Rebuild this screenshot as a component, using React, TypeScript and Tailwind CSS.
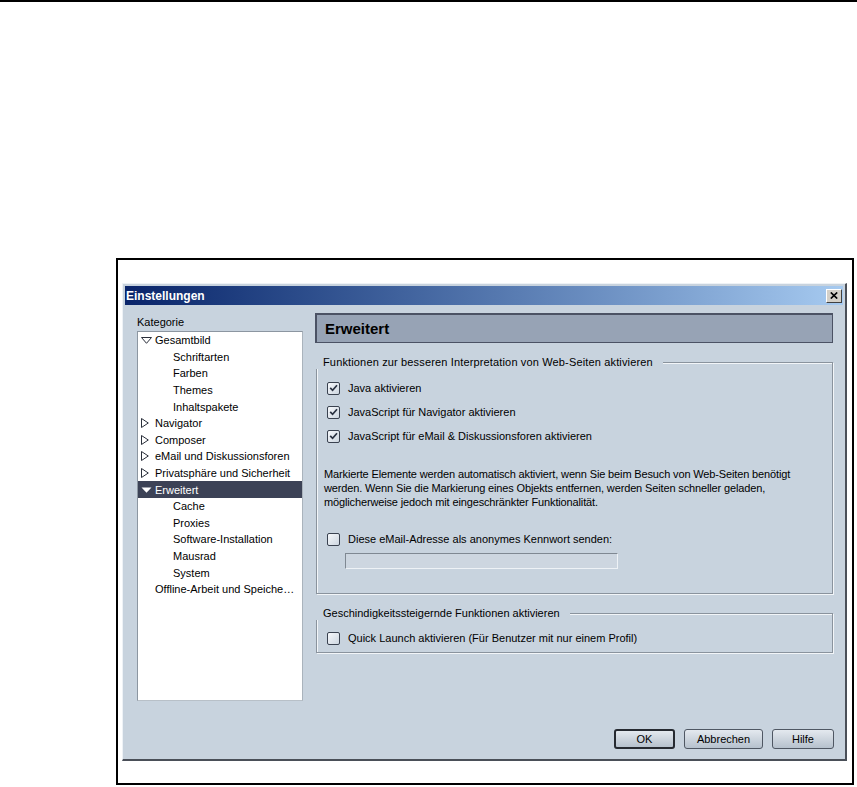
import React from "react";

type Item = { label: string; level: 0 | 1; tri?: "open" | "closed" | "sel" };

const items: Item[] = [
  { label: "Gesamtbild", level: 0, tri: "open" },
  { label: "Schriftarten", level: 1 },
  { label: "Farben", level: 1 },
  { label: "Themes", level: 1 },
  { label: "Inhaltspakete", level: 1 },
  { label: "Navigator", level: 0, tri: "closed" },
  { label: "Composer", level: 0, tri: "closed" },
  { label: "eMail und Diskussionsforen", level: 0, tri: "closed" },
  { label: "Privatsphäre und Sicherheit", level: 0, tri: "closed" },
  { label: "Erweitert", level: 0, tri: "sel" },
  { label: "Cache", level: 1 },
  { label: "Proxies", level: 1 },
  { label: "Software-Installation", level: 1 },
  { label: "Mausrad", level: 1 },
  { label: "System", level: 1 },
  { label: "Offline-Arbeit und Speiche…", level: 0 },
];

function Tri({ kind }: { kind?: Item["tri"] }) {
  if (kind === "open")
    return (
      <svg width="11" height="7" viewBox="0 0 11 7" className="block">
        <polygon points="0.5,0.5 10.5,0.5 5.5,6.3" fill="none" stroke="#2a2f3a" strokeWidth="1" />
      </svg>
    );
  if (kind === "closed")
    return (
      <svg width="8" height="10" viewBox="0 0 8 10" className="block">
        <polygon points="0.5,0.5 7.3,5 0.5,9.5" fill="none" stroke="#2a2f3a" strokeWidth="1" />
      </svg>
    );
  if (kind === "sel")
    return (
      <svg width="11" height="6" viewBox="0 0 11 6" className="block">
        <polygon points="0.5,0.5 10.5,0.5 5.5,5.8" fill="#ffffff" />
      </svg>
    );
  return null;
}

function Check({ checked }: { checked?: boolean }) {
  return (
    <span className="w-[13px] h-[13px] shrink-0 rounded-[2px] border border-[#3a4250] bg-gradient-to-br from-[#f6f8fb] to-[#cdd6e0] flex items-center justify-center">
      {checked && (
        <svg width="9" height="8" viewBox="0 0 9 8" className="block">
          <path d="M1.2 3.8 L3.6 6.3 L8 1.2" stroke="#2a3242" strokeWidth="1.7" fill="none" />
        </svg>
      )}
    </span>
  );
}

function Row({ checked, label }: { checked?: boolean; label: string }) {
  return (
    <div className="h-[24px] flex items-center gap-[8px] ml-[3px]">
      <Check checked={checked} />
      <span className="whitespace-nowrap">{label}</span>
    </div>
  );
}

function Btn({ label, w, def }: { label: string; w: string; def?: boolean }) {
  return (
    <div
      className={
        "h-[20px] rounded-[3px] bg-gradient-to-b from-[#e4e9ef] to-[#b6c1cd] flex items-center justify-center " +
        w +
        (def ? " border-2 border-[#262a31]" : " border border-[#4f5763]")
      }
    >
      {label}
    </div>
  );
}

export default function App() {
  return (
    <div className="w-[857px] h-[787px] bg-white overflow-hidden font-['Liberation_Sans',Arial,sans-serif] text-[11px] leading-[14px] text-black">
      <div className="h-[2px] bg-black" />
      <div className="ml-[116px] mt-[256px] w-[738px] h-[527px] border-2 border-black pl-[4px] pt-[23px]">
        <div className="w-[725px] h-[478px] flex flex-col bg-[#c8d3de] border-t border-l border-[#eef2f6] border-r-2 border-b-2 border-r-[#4a4f58] border-b-[#4a4f58] p-[2px]">
          {/* title bar */}
          <div className="h-[19px] shrink-0 bg-gradient-to-r from-[#0a246a] to-[#a6caf0] flex items-center justify-between pl-[1px] pr-[1px]">
            <span className="text-white font-bold text-[12px] leading-[14px]">Einstellungen</span>
            <span className="w-[16px] h-[14px] bg-[#d4d0c8] border border-t-white border-l-white border-r-[#404040] border-b-[#404040] flex items-center justify-center">
              <svg width="8" height="7" viewBox="0 0 8 7" className="block">
                <path d="M0.8 0.5 L7.2 6.5 M7.2 0.5 L0.8 6.5" stroke="#000" strokeWidth="1.7" />
              </svg>
            </span>
          </div>
          {/* body */}
          <div className="flex flex-1 min-h-0">
            {/* left column */}
            <div className="w-[166px] ml-[12px] pt-[10px] flex flex-col shrink-0">
              <div className="h-[14px] leading-[14px]">Kategorie</div>
              <div className="mt-[2px] h-[370px] bg-white border border-[#8c96a1] border-r-[#aab3bc] border-b-[#b8c0c8]">
                {items.map((it, i) => {
                  const sel = it.tri === "sel";
                  return (
                    <div
                      key={i}
                      className={"h-[16.6px] flex items-center whitespace-nowrap " + (sel ? "bg-[#3c4256] text-white" : "")}
                    >
                      {it.level === 0 ? (
                        <>
                          <span className="w-[17px] shrink-0 flex items-center pl-[3px]">
                            <Tri kind={it.tri} />
                          </span>
                          <span>{it.label}</span>
                        </>
                      ) : (
                        <span className="pl-[35px]">{it.label}</span>
                      )}
                    </div>
                  );
                })}
              </div>
            </div>
            {/* right column */}
            <div className="ml-[12px] w-[518px] pt-[8px] pb-[8px] flex flex-col shrink-0">
              <div className="h-[30px] shrink-0 bg-[#97a3b5] border-t-2 border-l-2 border-r border-b border-[#4b5264] flex items-center pl-[8px]">
                <span className="font-bold text-[15px] leading-[18px]">Erweitert</span>
              </div>

              {/* groupbox 1 */}
              <div className="relative mt-[19px] ml-[1px] h-[232px] shrink-0 border border-[#8a939d] shadow-[inset_1px_1px_0_#f2f5f8,1px_1px_0_#f2f5f8] pl-[7px] pt-[13px]">
                <div className="absolute -top-[8px] -left-[2px] pl-[8px] pr-[10px] bg-[#c8d3de] leading-[14px] whitespace-nowrap tracking-[0.15px]">
                  Funktionen zur besseren Interpretation von Web-Seiten aktivieren
                </div>
                <Row checked label="Java aktivieren" />
                <Row checked label="JavaScript für Navigator aktivieren" />
                <Row checked label="JavaScript für eMail & Diskussionsforen aktivieren" />
                <p className="mt-[19px] leading-[14px] whitespace-nowrap tracking-[-0.14px]">
                  Markierte Elemente werden automatisch aktiviert, wenn Sie beim Besuch von Web-Seiten benötigt
                  <br />
                  werden. Wenn Sie die Markierung eines Objekts entfernen, werden Seiten schneller geladen,
                  <br />
                  möglicherweise jedoch mit eingeschränkter Funktionalität.
                </p>
                <div className="mt-[22px] h-[16px] flex items-center gap-[8px] ml-[3px]">
                  <Check />
                  <span className="whitespace-nowrap">Diese eMail-Adresse als anonymes Kennwort senden:</span>
                </div>
                <div className="mt-[6px] ml-[21px] w-[273px] h-[16px] bg-[#cdd6e0] border border-[#7f8892] border-r-[#eef2f6] border-b-[#eef2f6]" />
              </div>

              {/* groupbox 2 */}
              <div className="relative mt-[19px] ml-[1px] h-[40px] shrink-0 border border-[#8a939d] shadow-[inset_1px_1px_0_#f2f5f8,1px_1px_0_#f2f5f8] pl-[7px] pt-[16px]">
                <div className="absolute -top-[8px] -left-[2px] pl-[8px] pr-[10px] bg-[#c8d3de] leading-[14px] whitespace-nowrap">
                  Geschindigkeitssteigernde Funktionen aktivieren
                </div>
                <div className="h-[16px] flex items-center gap-[8px] ml-[3px]">
                  <Check />
                  <span className="whitespace-nowrap">Quick Launch aktivieren (Für Benutzer mit nur einem Profil)</span>
                </div>
              </div>

              {/* buttons */}
              <div className="mt-auto flex justify-end gap-[9px] -mr-[1px]">
                <Btn label="OK" w="w-[61px]" def />
                <Btn label="Abbrechen" w="w-[79px]" />
                <Btn label="Hilfe" w="w-[62px]" />
              </div>
            </div>
          </div>
        </div>
      </div>
    </div>
  );
}
